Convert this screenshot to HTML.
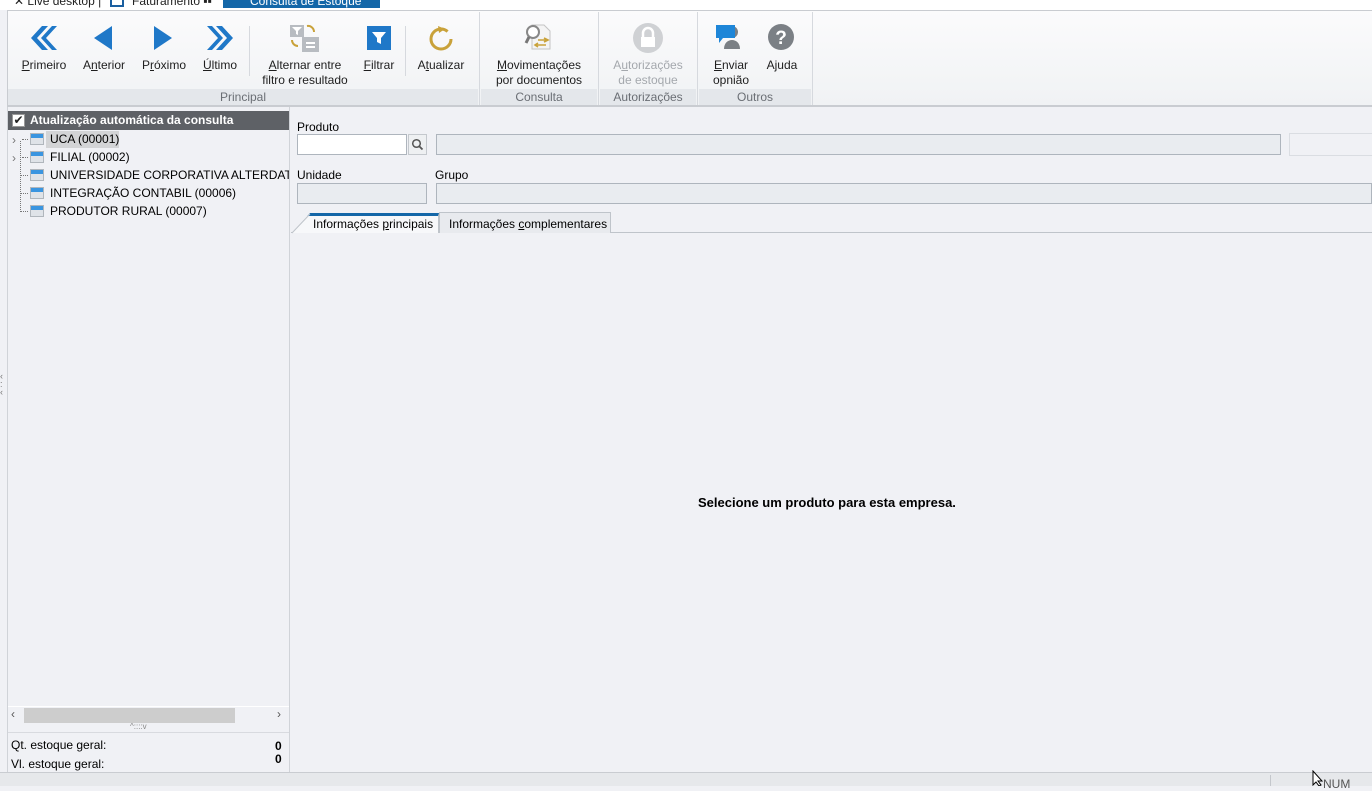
<!DOCTYPE html>
<html><head><meta charset="utf-8"><style>
*{box-sizing:border-box;margin:0;padding:0}
body{width:1372px;height:786px;overflow:hidden;background:#f0f1f5;font-family:"Liberation Sans",sans-serif;font-size:12px;color:#000;position:relative}
.a{position:absolute;white-space:nowrap}
.rb{font-size:12px;color:#1e1e1e;text-align:center;line-height:15px}
.grp{position:absolute;top:89px;height:16px;background:#e4e7eb;color:#6a6e74;font-size:12px;text-align:center;line-height:16px}
.sep{position:absolute;width:1px;background:#d6d9de}
.inp{position:absolute;background:#e9ecf0;border:1px solid #aeb5bd}
u{text-decoration:underline}
.tr span{white-space:nowrap}
</style></head><body>
<div class="a" style="left:0;top:0;width:1372px;height:10px;background:#fff"></div>
<div class="a" style="left:14px;top:-6px;font-size:12px;color:#222">✕ Live desktop |</div>
<div class="a" style="left:110px;top:-3px;width:14px;height:10px;border:2px solid #1a5fa0"></div>
<div class="a" style="left:132px;top:-6px;font-size:12px;color:#222">Faturamento ▪▪</div>
<div class="a" style="left:223px;top:0;width:157px;height:8px;background:#1467a8"></div>
<div class="a" style="left:250px;top:-6px;font-size:12px;color:#fff">Consulta de Estoque</div>
<div class="a" style="left:7px;top:10px;width:1365px;height:96px;background:linear-gradient(#fbfbfc,#f0f2f4);border-top:1px solid #c9ccd1;border-left:1px solid #c9ccd1"></div>
<div class="grp" style="left:8px;width:470px">Principal</div>
<div class="grp" style="left:481px;width:116px">Consulta</div>
<div class="grp" style="left:600px;width:96px">Autorizações</div>
<div class="grp" style="left:699px;width:112px">Outros</div>
<div class="sep" style="left:479px;top:12px;height:94px"></div>
<div class="sep" style="left:598px;top:12px;height:94px"></div>
<div class="sep" style="left:697px;top:12px;height:94px"></div>
<div class="sep" style="left:812px;top:12px;height:94px"></div>
<div class="sep" style="left:249px;top:26px;height:50px"></div>
<div class="sep" style="left:405px;top:26px;height:50px"></div>
<div class="a" style="left:7px;top:105px;width:1365px;height:2px;background:#c9ccd1"></div>
<svg class="a" style="left:28px;top:24px" width="30" height="28" viewBox="0 0 30 28"><path d="M14 2 3 14 14 26h6L9 14 20 2z M24 2 13 14l11 12h5L18 14 29 2z" fill="#1f78c8"/></svg>
<svg class="a" style="left:92px;top:25px" width="22" height="26"><path d="M20 1 2 13l18 12z" fill="#1f78c8"/></svg>
<svg class="a" style="left:152px;top:25px" width="22" height="26"><path d="M2 1l18 12L2 25z" fill="#1f78c8"/></svg>
<svg class="a" style="left:206px;top:24px" width="30" height="28" viewBox="0 0 30 28"><path d="M1 2h5l11 12L6 26H1l11-12z M10 2h6l11 12-11 12h-6l11-12z" fill="#1f78c8"/></svg>
<svg class="a" style="left:289px;top:23px" width="32" height="30"><rect x="1" y="2" width="14" height="12" fill="#b8bcc1"/><path d="M3 4h10l-4 4v4l-2-1V8z" fill="#fff"/><rect x="13" y="14" width="17" height="15" fill="#b8bcc1"/><rect x="17" y="19" width="9" height="2" fill="#fff"/><rect x="17" y="23" width="9" height="2" fill="#fff"/><path d="M18 3a6 6 0 0 1 7 6" stroke="#c9a23a" stroke-width="2" fill="none"/><path d="M3 17a6 6 0 0 0 6 6" stroke="#c9a23a" stroke-width="2" fill="none"/></svg>
<svg class="a" style="left:367px;top:26px" width="24" height="24"><rect width="24" height="24" fill="#1f78c8"/><path d="M5 6h14l-5 6v6l-4-2v-4z" fill="#fff"/></svg>
<svg class="a" style="left:427px;top:24px" width="28" height="28"><circle cx="14" cy="15" r="10" stroke="#c9a23a" stroke-width="3" fill="none" stroke-dasharray="54 10"/><path d="M11 2l7 3-6 4z" fill="#c9a23a"/></svg>
<svg class="a" style="left:524px;top:22px" width="30" height="30"><path d="M8 3h12l6 6v18H8z" fill="#f4f4f4" stroke="#c4c4c4"/><circle cx="9" cy="10" r="6" fill="#fff" stroke="#888" stroke-width="2"/><path d="M5 15l-3 6" stroke="#777" stroke-width="3"/><path d="M14 18h10M20 16l4 2-4 2M12 23h10M14 21l-3 2 3 2" stroke="#c9a23a" stroke-width="1.6" fill="none"/></svg>
<svg class="a" style="left:632px;top:22px" width="32" height="32"><circle cx="16" cy="16" r="15" fill="#cfd1d4"/><path d="M11 15v-4a5 5 0 0 1 10 0v4" stroke="#fff" stroke-width="2.5" fill="none"/><rect x="9" y="15" width="14" height="10" fill="#fff"/></svg>
<svg class="a" style="left:715px;top:23px" width="34" height="28"><path d="M11 9a6 6 0 1 1 12 0 6 6 0 1 1-12 0zM9 26c0-6 4-9 8-9s8 3 8 9z" fill="#7b8085"/><path d="M1 2h19v13H8l-4 5v-5H1z" fill="#1e86d8"/></svg>
<svg class="a" style="left:767px;top:23px" width="28" height="28"><circle cx="14" cy="14" r="13" fill="#7b8085"/><text x="14" y="21" text-anchor="middle" font-family="Liberation Sans" font-weight="bold" font-size="19" fill="#fff">?</text></svg>
<div class="a rb" style="left:14px;top:58px;width:60px"><u>P</u>rimeiro</div>
<div class="a rb" style="left:76px;top:58px;width:56px">A<u>n</u>terior</div>
<div class="a rb" style="left:136px;top:58px;width:56px">P<u>r</u>óximo</div>
<div class="a rb" style="left:196px;top:58px;width:48px"><u>Ú</u>ltimo</div>
<div class="a rb" style="left:255px;top:58px;width:100px"><u>A</u>lternar entre<br>filtro e resultado</div>
<div class="a rb" style="left:358px;top:58px;width:42px"><u>F</u>iltrar</div>
<div class="a rb" style="left:412px;top:58px;width:58px">A<u>t</u>ualizar</div>
<div class="a rb" style="left:486px;top:58px;width:106px"><u>M</u>ovimentações<br>por documentos</div>
<div class="a rb" style="left:602px;top:58px;width:92px;color:#a4a8ad">A<u>u</u>torizações<br>de estoque</div>
<div class="a rb" style="left:706px;top:58px;width:50px"><u>E</u>nviar<br>opnião</div>
<div class="a rb" style="left:760px;top:58px;width:44px">Ajuda</div>
<div class="a" style="left:0;top:107px;width:8px;height:666px;background:#f0f1f5;border-right:1px solid #d0d3d8"></div>
<div class="a" style="left:0;top:372px;font-size:9px;color:#777;line-height:8px">‹<br>:<br>‹</div>
<div class="a" style="left:8px;top:107px;width:282px;height:666px;background:#f0f1f5;border-right:1px solid #d0d3d8"></div>
<div class="a" style="left:8px;top:111px;width:281px;height:19px;background:#5e6166"></div>
<div class="a" style="left:12px;top:114px;width:13px;height:13px;background:#fff;border:1px solid #999;font-size:12px;line-height:11px;text-align:center;color:#222">✔</div>
<div class="a" style="left:30px;top:113px;color:#fff;font-weight:bold;font-size:12px;line-height:15px">Atualização automática da consulta</div>
<div class="a" style="left:20px;top:141px;width:1px;height:71px;border-left:1px dotted #777"></div>
<div class="a" style="left:46px;top:131px;width:73px;height:17px;background:#d3d4d6"></div>
<div class="a" style="left:12px;top:133px;color:#777;font-size:12px;line-height:15px">›</div>
<div class="a" style="left:12px;top:151px;color:#777;font-size:12px;line-height:15px">›</div>
<div class="tr" style="position:absolute;left:20px;top:130px;line-height:18px;font-size:12px;width:269px;overflow:hidden;height:92px">
<div style="position:relative;height:18px"><span style="position:absolute;left:2px;top:9px;width:6px;border-top:1px dotted #777"></span><span style="position:absolute;left:10px;top:3px;width:14px;height:12px;background:linear-gradient(#3a95e0 0 4px,#dfe3e8 4px);border:1px solid #b0b6bc"></span><span style="position:absolute;left:30px">UCA (00001)</span></div>
<div style="position:relative;height:18px"><span style="position:absolute;left:2px;top:9px;width:6px;border-top:1px dotted #777"></span><span style="position:absolute;left:10px;top:3px;width:14px;height:12px;background:linear-gradient(#3a95e0 0 4px,#dfe3e8 4px);border:1px solid #b0b6bc"></span><span style="position:absolute;left:30px">FILIAL (00002)</span></div>
<div style="position:relative;height:18px"><span style="position:absolute;left:0;top:9px;width:8px;border-top:1px dotted #777"></span><span style="position:absolute;left:10px;top:3px;width:14px;height:12px;background:linear-gradient(#3a95e0 0 4px,#dfe3e8 4px);border:1px solid #b0b6bc"></span><span style="position:absolute;left:30px">UNIVERSIDADE CORPORATIVA ALTERDATA (SP)</span></div>
<div style="position:relative;height:18px"><span style="position:absolute;left:0;top:9px;width:8px;border-top:1px dotted #777"></span><span style="position:absolute;left:10px;top:3px;width:14px;height:12px;background:linear-gradient(#3a95e0 0 4px,#dfe3e8 4px);border:1px solid #b0b6bc"></span><span style="position:absolute;left:30px">INTEGRAÇÃO CONTABIL (00006)</span></div>
<div style="position:relative;height:18px"><span style="position:absolute;left:0;top:9px;width:8px;border-top:1px dotted #777"></span><span style="position:absolute;left:10px;top:3px;width:14px;height:12px;background:linear-gradient(#3a95e0 0 4px,#dfe3e8 4px);border:1px solid #b0b6bc"></span><span style="position:absolute;left:30px">PRODUTOR RURAL (00007)</span></div>
</div>
<div class="a" style="left:8px;top:706px;width:281px;height:1px;background:#fff"></div>
<div class="a" style="left:24px;top:708px;width:211px;height:15px;background:#cdcdcd"></div>
<div class="a" style="left:11px;top:707px;color:#555;font-size:12px">‹</div>
<div class="a" style="left:277px;top:707px;color:#555;font-size:12px">›</div>
<div class="a" style="left:130px;top:722px;color:#888;font-size:8px">^::::v</div>
<div class="a" style="left:8px;top:732px;width:281px;height:1px;background:#d8dadf"></div>
<div class="a" style="left:11px;top:738px;font-size:12px">Qt. estoque geral:</div>
<div class="a" style="left:11px;top:757px;font-size:12px">Vl. estoque geral:</div>
<div class="a" style="left:275px;top:739px;font-size:12px;font-weight:bold">0</div>
<div class="a" style="left:275px;top:752px;font-size:12px;font-weight:bold">0</div>
<div class="a" style="left:297px;top:120px;font-size:12px">Produto</div>
<div class="a" style="left:297px;top:134px;width:110px;height:21px;background:#fff;border:1px solid #aeb5bd"></div>
<div class="a" style="left:408px;top:134px;width:19px;height:21px;background:#eef0f2;border:1px solid #c4c8cd"></div>
<svg class="a" style="left:411px;top:138px" width="13" height="13"><circle cx="5.5" cy="5.5" r="3.8" stroke="#555" stroke-width="1.5" fill="none"/><path d="M8 8l3.5 3.5" stroke="#555" stroke-width="1.8"/></svg>
<div class="inp" style="left:436px;top:134px;width:845px;height:21px"></div>
<div class="a" style="left:1289px;top:133px;width:90px;height:23px;border:1px solid #dadde2;background:#f0f1f5"></div>
<div class="a" style="left:297px;top:168px;font-size:12px">Unidade</div>
<div class="a" style="left:435px;top:168px;font-size:12px">Grupo</div>
<div class="inp" style="left:297px;top:183px;width:130px;height:21px"></div>
<div class="inp" style="left:436px;top:183px;width:936px;height:21px"></div>
<div class="a" style="left:291px;top:232px;width:1081px;height:1px;background:#bfc4ca"></div>
<div class="a" style="left:291px;top:233px;width:1081px;height:540px;background:#f0f1f5"></div>
<div class="a" style="left:292px;top:213px;width:147px;height:20px;background:#f7f8fa;border-top:3px solid #1467a8;border-right:1px solid #bfc4ca;clip-path:polygon(18px 0,100% 0,100% 100%,0 100%)"></div>
<svg class="a" style="left:291px;top:213px" width="22" height="21"><path d="M1 20L19 1" stroke="#bfc4ca"/></svg>
<div class="a" style="left:313px;top:217px;font-size:12px">Informações <u>p</u>rincipais</div>
<div class="a" style="left:439px;top:212px;width:172px;height:21px;background:#e8eaee;border:1px solid #bfc4ca;border-bottom:none"></div>
<div class="a" style="left:449px;top:217px;font-size:12px">Informações <u>c</u>omplementares</div>
<div class="a" style="left:698px;top:495px;font-size:13px;font-weight:bold">Selecione um produto para esta empresa.</div>
<div class="a" style="left:0;top:772px;width:1372px;height:14px;background:linear-gradient(#c9ccd1 0 1px,#e6e8eb 1px)"></div>
<div class="a" style="left:1270px;top:775px;width:1px;height:11px;background:#c4c7cc"></div>
<div class="a" style="left:1323px;top:777px;font-size:12px;color:#555">NUM</div>
<svg class="a" style="left:1312px;top:770px" width="12" height="16"><path d="M1 1v14l3-3 3 4 2-1-3-4h4z" fill="#fff" stroke="#000"/></svg>
</body></html>
